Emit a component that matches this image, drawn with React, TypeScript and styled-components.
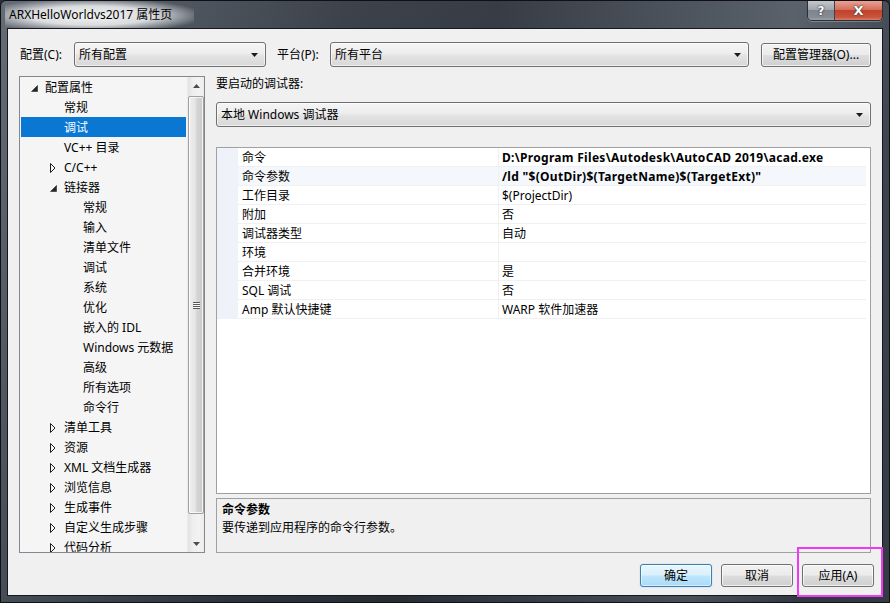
import React from "react";
import styled, { createGlobalStyle, css } from "styled-components";

const FONT = `"Segoe UI", "Noto Sans", "Noto Sans CJK SC", sans-serif`;

const Global = createGlobalStyle`
  html, body { margin: 0; padding: 0; width: 890px; height: 603px; overflow: hidden; background: #2a2f36; }
  #root { width: 890px; height: 603px; }
  * { box-sizing: border-box; }
`;

const Window = styled.div`
  width: 890px;
  height: 603px;
  display: flex;
  flex-direction: column;
  position: relative;
  overflow: hidden;
  border: 1px solid #0e1013;
  border-radius: 6px 6px 0 0;
  background:
    linear-gradient(180deg, rgba(255,255,255,0.06) 0%, rgba(0,0,0,0.1) 100%),
    linear-gradient(100deg, #5b636d 0%, #47505a 15%, #303740 35%, #2b3139 50%, #3e4650 66%, #505862 80%, #363d47 92%, #3a414b 100%);
  font-family: ${FONT};
  font-size: 12px;
  color: #000;
`;

const TitleBar = styled.div`
  height: 28px;
  display: flex;
  justify-content: space-between;
  align-items: flex-start;
  padding-left: 4px;
`;

const Title = styled.div`
  height: 28px;
  line-height: 27px;
  padding: 0 22px 0 4px;
  font-size: 12px;
  color: #000;
  white-space: nowrap;
  background: radial-gradient(ellipse 60% 62% at 46% 52%, rgba(255,255,255,0.92) 0%, rgba(255,255,255,0.78) 55%, rgba(255,255,255,0) 100%);
`;

const CaptionGroup = styled.div`
  display: flex;
  margin-right: 6px;
  border: 1px solid #2a2f36;
  border-top: none;
  border-radius: 0 0 5px 5px;
  overflow: hidden;
  box-shadow: 0 1px 0 rgba(255,255,255,0.25);
`;

const CaptionButton = styled.div<{ $close?: boolean }>`
  width: ${(p) => (p.$close ? 47 : 27)}px;
  height: 19px;
  display: flex;
  align-items: center;
  justify-content: center;
  font-family: "DejaVu Sans", sans-serif;
  font-weight: bold;
  color: #fff;
  text-shadow: 0 0 1px #222, 0 0 2px #333;
  ${(p) =>
    p.$close
      ? css`
          font-size: 13px;
          background: linear-gradient(180deg, #e8a293 0%, #d4705c 45%, #c2422b 50%, #c8543b 85%, #d9806a 100%);
        `
      : css`
          font-size: 12px;
          border-right: 1px solid #3c434b;
          background: linear-gradient(180deg, #c2c7cc 0%, #a1a7ae 45%, #7e858d 50%, #858c94 85%, #9ba1a8 100%);
        `}
`;

const Client = styled.div`
  flex: 1;
  margin: 0 7px 7px;
  background: #f0f0f0;
  box-shadow: 0 0 0 1px #15181c;
  display: flex;
  flex-direction: column;
`;

const TopRow = styled.div`
  margin-top: 13px;
  height: 25px;
  padding-left: 12px;
  display: flex;
  align-items: center;
`;

const FieldLabel = styled.div<{ $w: number; $gap?: number }>`
  width: ${(p) => p.$w}px;
  margin-left: ${(p) => p.$gap ?? 0}px;
  line-height: 16px;
  white-space: nowrap;
`;

const Combo = styled.div<{ $w?: number }>`
  ${(p) => (p.$w ? `width: ${p.$w}px;` : "align-self: stretch;")}
  height: 25px;
  flex-shrink: 0;
  border: 1px solid #707070;
  border-radius: 3px;
  background: linear-gradient(180deg, #f5f5f5 0%, #ededed 45%, #e3e3e3 55%, #d8d8d8 100%);
  box-shadow: inset 0 0 0 1px rgba(255,255,255,0.6);
  display: flex;
  align-items: center;
  justify-content: space-between;
  padding: 0 7px 0 4px;
  line-height: 16px;
  white-space: nowrap;
`;

const PushButton = styled.div<{ $w: number; $default?: boolean }>`
  width: ${(p) => p.$w}px;
  height: 23px;
  flex-shrink: 0;
  border-radius: 3px;
  display: flex;
  align-items: center;
  justify-content: center;
  white-space: nowrap;
  line-height: 16px;
  ${(p) =>
    p.$default
      ? css`
          border: 1px solid #3c7fb1;
          background: linear-gradient(180deg, #eaf6fd 0%, #d9f0fc 48%, #bee6fd 52%, #a9daf6 100%);
          box-shadow: inset 0 0 0 1px rgba(255,255,255,0.55), 0 0 1px #48a3e0;
        `
      : css`
          border: 1px solid #707070;
          background: linear-gradient(180deg, #f2f2f2 0%, #ebebeb 48%, #dddddd 52%, #cfcfcf 100%);
          box-shadow: inset 0 0 0 1px rgba(255,255,255,0.7);
        `}
`;

const ManagerButton = styled(PushButton)`
  height: 24px;
  margin-left: 12px;
`;

const Main = styled.div`
  margin-top: 9px;
  height: 477px;
  padding-left: 11px;
  display: flex;
`;

const Tree = styled.div`
  width: 186px;
  height: 477px;
  border: 1px solid #828790;
  background: #f5f5f5;
  display: flex;
`;

const TreeList = styled.div`
  flex: 1;
  overflow: hidden;
  display: flex;
  flex-direction: column;
`;

const TreeRow = styled.div<{ $level: number; $sel?: boolean }>`
  height: 20px;
  flex-shrink: 0;
  display: flex;
  align-items: center;
  padding-left: ${(p) => 9 + p.$level * 19}px;
  padding-top: 2px;
  margin: 0 1px;
  white-space: nowrap;
  line-height: 16px;
  ${(p) =>
    p.$sel &&
    css`
      background: #0a78d3;
      color: #fff;
    `}
`;

const Expander = styled.span`
  width: 15px;
  height: 18px;
  flex-shrink: 0;
  display: flex;
  align-items: center;
  padding-left: 1px;
`;

const ScrollBar = styled.div`
  width: 17px;
  display: flex;
  flex-direction: column;
  background: linear-gradient(90deg, #e2e2e2 0%, #efefef 30%, #f3f3f3 70%, #ebebeb 100%);
  border-left: 1px solid #ececec;
`;

const ScrollArrow = styled.div`
  height: 17px;
  display: flex;
  align-items: center;
  justify-content: center;
  flex-shrink: 0;
`;

const ScrollTrack = styled.div`
  flex: 1;
  padding-top: 2px;
  display: flex;
  flex-direction: column;
`;

const Thumb = styled.div`
  height: 418px;
  border: 1px solid #a0a0a0;
  border-radius: 2px;
  background: linear-gradient(90deg, #f0f0f0 0%, #e4e4e4 45%, #d6d6d6 55%, #cacaca 100%);
  box-shadow: inset 0 0 0 1px rgba(255,255,255,0.75);
  display: flex;
  align-items: center;
  justify-content: center;
`;

const Grip = styled.div`
  width: 7px;
  height: 7px;
  background: repeating-linear-gradient(180deg, #5a5a5a 0 1px, #f8f8f8 1px 2px);
`;

const RightPane = styled.div`
  width: 655px;
  margin-left: 11px;
  display: flex;
  flex-direction: column;
`;

const PaneLabel = styled.div`
  height: 16px;
  line-height: 16px;
  white-space: nowrap;
`;

const DebuggerCombo = styled(Combo)`
  margin-top: 10px;
`;

const Grid = styled.div`
  margin-top: 20px;
  height: 347px;
  background: #fff;
  border: 1px solid #a0a0a0;
  display: flex;
  flex-direction: column;
`;

const PropRow = styled.div<{ $sel?: boolean }>`
  display: grid;
  grid-template-columns: 21px 261px 1fr;
  height: 19px;
  flex-shrink: 0;
  margin-right: 4px;
  background: ${(p) => (p.$sel ? "#f4f7fb" : "#fff")};
`;

const Margin = styled.div`
  background: #eff3f9;
`;

const Cell = styled.div<{ $bold?: boolean; $name?: boolean }>`
  border-bottom: 1px solid #f0f0f0;
  ${(p) => (p.$name ? "border-right: 1px solid #f0f0f0; padding-left: 4px;" : "padding-left: 3px;")}
  ${(p) => p.$bold && "font-weight: 700; letter-spacing: 0.3px;"}
  padding-top: 2px;
  line-height: 16px;
  white-space: nowrap;
  overflow: hidden;
`;

const Desc = styled.div`
  margin-top: 4px;
  height: 55px;
  border: 1px solid #a0a0a0;
  background: #f0f0f0;
  padding: 3px 5px;
  display: flex;
  flex-direction: column;
  gap: 2px;
`;

const DescTitle = styled.div`
  font-weight: 700;
  line-height: 16px;
`;

const DescText = styled.div`
  line-height: 16px;
`;

const BottomBar = styled.div`
  margin-top: 11px;
  height: 23px;
  display: flex;
  justify-content: flex-end;
  gap: 9px;
  padding-right: 8px;
`;

const Highlight = styled.div`
  position: absolute;
  left: 796px;
  top: 546px;
  width: 86px;
  height: 50px;
  border: 2px solid #ee3af0;
  pointer-events: none;
`;

const DropArrow = () => (
  <svg width="7" height="4" viewBox="0 0 7 4">
    <path d="M0 0 H7 L3.5 4 Z" fill="#1a1a1a" />
  </svg>
);

const OpenTri = () => (
  <svg width="7" height="7" viewBox="0 0 7 7">
    <path d="M6.5 0.5 V6.5 H0.5 Z" fill="#262626" stroke="#262626" strokeWidth="0.6" />
  </svg>
);

const ClosedTri = () => (
  <svg width="6" height="10" viewBox="0 0 6 10">
    <path d="M0.5 0.5 L5 5 L0.5 9.5 Z" fill="none" stroke="#1e1e1e" strokeWidth="1" />
  </svg>
);

const ScrollTri = ({ up }: { up?: boolean }) => (
  <svg width="7" height="4" viewBox="0 0 7 4">
    <path d={up ? "M0 4 H7 L3.5 0 Z" : "M0 0 H7 L3.5 4 Z"} fill="#4d4d4d" />
  </svg>
);

type Node = { level: number; text: string; exp?: "open" | "closed"; sel?: boolean };

const tree: Node[] = [
  { level: 0, text: "配置属性", exp: "open" },
  { level: 1, text: "常规" },
  { level: 1, text: "调试", sel: true },
  { level: 1, text: "VC++ 目录" },
  { level: 1, text: "C/C++", exp: "closed" },
  { level: 1, text: "链接器", exp: "open" },
  { level: 2, text: "常规" },
  { level: 2, text: "输入" },
  { level: 2, text: "清单文件" },
  { level: 2, text: "调试" },
  { level: 2, text: "系统" },
  { level: 2, text: "优化" },
  { level: 2, text: "嵌入的 IDL" },
  { level: 2, text: "Windows 元数据" },
  { level: 2, text: "高级" },
  { level: 2, text: "所有选项" },
  { level: 2, text: "命令行" },
  { level: 1, text: "清单工具", exp: "closed" },
  { level: 1, text: "资源", exp: "closed" },
  { level: 1, text: "XML 文档生成器", exp: "closed" },
  { level: 1, text: "浏览信息", exp: "closed" },
  { level: 1, text: "生成事件", exp: "closed" },
  { level: 1, text: "自定义生成步骤", exp: "closed" },
  { level: 1, text: "代码分析", exp: "closed" },
];

type Prop = { name: string; value: string; bold?: boolean; sel?: boolean };

const props: Prop[] = [
  { name: "命令", value: "D:\\Program Files\\Autodesk\\AutoCAD 2019\\acad.exe", bold: true },
  { name: "命令参数", value: '/ld "$(OutDir)$(TargetName)$(TargetExt)"', bold: true, sel: true },
  { name: "工作目录", value: "$(ProjectDir)" },
  { name: "附加", value: "否" },
  { name: "调试器类型", value: "自动" },
  { name: "环境", value: "" },
  { name: "合并环境", value: "是" },
  { name: "SQL 调试", value: "否" },
  { name: "Amp 默认快捷键", value: "WARP 软件加速器" },
];

export default function App() {
  return (
    <>
      <Global />
      <Window>
        <TitleBar>
          <Title>ARXHelloWorldvs2017 属性页</Title>
          <CaptionGroup>
            <CaptionButton>?</CaptionButton>
            <CaptionButton $close>X</CaptionButton>
          </CaptionGroup>
        </TitleBar>
        <Client>
          <TopRow>
            <FieldLabel $w={54}>配置(C):</FieldLabel>
            <Combo $w={192}>
              <span>所有配置</span>
              <DropArrow />
            </Combo>
            <FieldLabel $w={53} $gap={11}>平台(P):</FieldLabel>
            <Combo $w={419}>
              <span>所有平台</span>
              <DropArrow />
            </Combo>
            <ManagerButton $w={110}>配置管理器(O)...</ManagerButton>
          </TopRow>
          <Main>
            <Tree>
              <TreeList>
                {tree.map((n, i) => (
                  <TreeRow key={i} $level={n.level} $sel={n.sel}>
                    <Expander>
                      {n.exp === "open" ? <OpenTri /> : n.exp === "closed" ? <ClosedTri /> : null}
                    </Expander>
                    {n.text}
                  </TreeRow>
                ))}
              </TreeList>
              <ScrollBar>
                <ScrollArrow>
                  <ScrollTri up />
                </ScrollArrow>
                <ScrollTrack>
                  <Thumb>
                    <Grip />
                  </Thumb>
                </ScrollTrack>
                <ScrollArrow>
                  <ScrollTri />
                </ScrollArrow>
              </ScrollBar>
            </Tree>
            <RightPane>
              <PaneLabel>要启动的调试器:</PaneLabel>
              <DebuggerCombo>
                <span>本地 Windows 调试器</span>
                <DropArrow />
              </DebuggerCombo>
              <Grid>
                {props.map((p, i) => (
                  <PropRow key={i} $sel={p.sel}>
                    <Margin />
                    <Cell $name>{p.name}</Cell>
                    <Cell $bold={p.bold}>{p.value}</Cell>
                  </PropRow>
                ))}
              </Grid>
              <Desc>
                <DescTitle>命令参数</DescTitle>
                <DescText>要传递到应用程序的命令行参数。</DescText>
              </Desc>
            </RightPane>
          </Main>
          <BottomBar>
            <PushButton $w={72} $default>确定</PushButton>
            <PushButton $w={72}>取消</PushButton>
            <PushButton $w={72}>应用(A)</PushButton>
          </BottomBar>
        </Client>
        <Highlight />
      </Window>
    </>
  );
}
